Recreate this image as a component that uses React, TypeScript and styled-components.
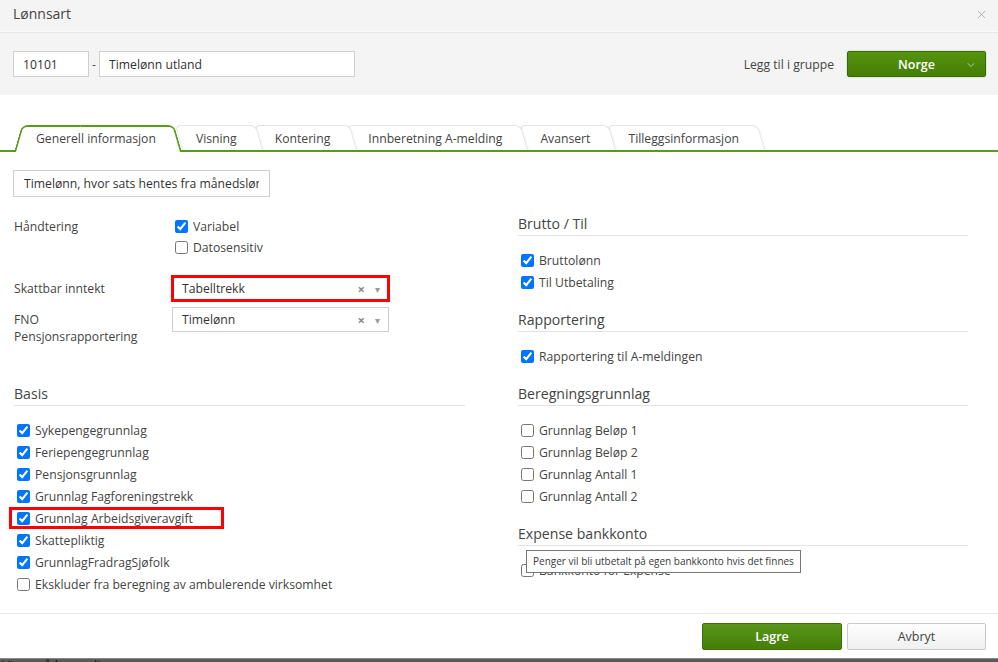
import styled, { createGlobalStyle } from "styled-components"
import { X, ChevronDown } from "lucide-react"

const GREEN = "#5a9b1c"
const TEXT = "12.2px"

const GlobalStyle = createGlobalStyle`
  html, body {
    margin: 0;
    padding: 0;
    background: #fff;
  }
  body {
    font-family: "Open Sans", "Liberation Sans", sans-serif;
    font-size: ${TEXT};
    color: #444;
  }
  * {
    box-sizing: border-box;
  }
`

const tabs = [
  "Generell informasjon",
  "Visning",
  "Kontering",
  "Innberetning A-melding",
  "Avansert",
  "Tilleggsinformasjon",
]

const basis = [
  { label: "Sykepengegrunnlag", checked: true },
  { label: "Feriepengegrunnlag", checked: true },
  { label: "Pensjonsgrunnlag", checked: true },
  { label: "Grunnlag Fagforeningstrekk", checked: true },
  { label: "Grunnlag Arbeidsgiveravgift", checked: true, highlight: true },
  { label: "Skattepliktig", checked: true },
  { label: "GrunnlagFradragSjøfolk", checked: true },
  { label: "Ekskluder fra beregning av ambulerende virksomhet", checked: false },
]

const sections = [
  {
    title: "Brutto / Til",
    items: [
      { label: "Bruttolønn", checked: true },
      { label: "Til Utbetaling", checked: true },
    ],
  },
  {
    title: "Rapportering",
    items: [{ label: "Rapportering til A-meldingen", checked: true }],
  },
  {
    title: "Beregningsgrunnlag",
    items: [
      { label: "Grunnlag Beløp 1", checked: false },
      { label: "Grunnlag Beløp 2", checked: false },
      { label: "Grunnlag Antall 1", checked: false },
      { label: "Grunnlag Antall 2", checked: false },
    ],
  },
  {
    title: "Expense bankkonto",
    items: [{ label: "Bankkonto for Expense", checked: false }],
    tooltip: "Penger vil bli utbetalt på egen bankkonto hvis det finnes",
  },
]

function Check({ label, checked, highlight }: { label: string; checked: boolean; highlight?: boolean }) {
  return (
    <CheckItem $highlight={highlight}>
      <CheckBox type="checkbox" defaultChecked={checked} />
      <span>{label}</span>
    </CheckItem>
  )
}

export default function App() {
  return (
    <>
      <GlobalStyle />
      <Dialog>
        <Header>
          <Title>Lønnsart</Title>
          <X size={13} strokeWidth={1.4} color="#9a9a9a" />
        </Header>
        <TopBar>
          <NumberInput defaultValue="10101" readOnly />
          <Dash>-</Dash>
          <NameInput defaultValue="Timelønn utland" readOnly />
          <Spacer />
          <GroupLabel>Legg til i gruppe</GroupLabel>
          <GroupButton>
            <span>Norge</span>
            <ChevronDown size={12} strokeWidth={1.3} color="#e6f0dc" />
          </GroupButton>
        </TopBar>

        <Main>
          <TabBar>
            {tabs.map((t, i) => (
              <Tab key={t} $active={i === 0} $z={i === 0 ? 10 : 8 - i}>
                {t}
              </Tab>
            ))}
          </TabBar>

          <Content>
            <DescInput defaultValue="Timelønn, hvor sats hentes fra månedslønn" readOnly />

            <Columns>
              <Column>
                <FieldRow $top={2}>
                  <FieldLabel $lh={21}>Håndtering</FieldLabel>
                  <div>
                    <SmallCheck>
                      <CheckBox type="checkbox" defaultChecked />
                      <span>Variabel</span>
                    </SmallCheck>
                    <SmallCheck>
                      <CheckBox type="checkbox" />
                      <span>Datosensitiv</span>
                    </SmallCheck>
                  </div>
                </FieldRow>
                <FieldRow $top={18}>
                  <FieldLabel $lh={17} $pad={4}>Skattbar inntekt</FieldLabel>
                  <Select $highlight>
                    <SelectValue>Tabelltrekk</SelectValue>
                    <Clear>×</Clear>
                    <Arrow>▾</Arrow>
                  </Select>
                </FieldRow>
                <FieldRow $top={6}>
                  <FieldLabel $lh={17} $pad={4}>
                    FNO
                    <br />
                    Pensjonsrapportering
                  </FieldLabel>
                  <Select>
                    <SelectValue>Timelønn</SelectValue>
                    <Clear>×</Clear>
                    <Arrow>▾</Arrow>
                  </Select>
                </FieldRow>

                <Section $top={39}>
                  <SectionTitle>Basis</SectionTitle>
                  <CheckList>
                    {basis.map((b) => (
                      <Check key={b.label} {...b} />
                    ))}
                  </CheckList>
                </Section>
              </Column>

              <Column>
                {sections.map((s, i) => (
                  <Section key={s.title} $top={i === 0 ? 0 : 17}>
                    <SectionTitle>{s.title}</SectionTitle>
                    <CheckList>
                      {s.items.map((it) => (
                        <Check key={it.label} {...it} />
                      ))}
                    </CheckList>
                    {s.tooltip && <Tooltip>{s.tooltip}</Tooltip>}
                  </Section>
                ))}
              </Column>
            </Columns>
          </Content>
        </Main>

        <Footer>
          <PrimaryButton>Lagre</PrimaryButton>
          <SecondaryButton>Avbryt</SecondaryButton>
        </Footer>
        <Backdrop>Vises på lønnsslipp</Backdrop>
      </Dialog>
    </>
  )
}

const Dialog = styled.div`
  width: 998px;
  height: 662px;
  display: flex;
  flex-direction: column;
  overflow: hidden;
  background: #fff;
`

const Header = styled.div`
  height: 33px;
  display: flex;
  align-items: flex-start;
  justify-content: space-between;
  padding: 4px 10px 0 13px;
  background: #f4f4f4;
  border-bottom: 1px solid #e9e9e9;
  box-shadow: inset 0 -1px 0 #fbfbfb;

  svg {
    margin-top: 4px;
  }
`

const Title = styled.div`
  font-size: 14px;
  line-height: 20px;
  color: #444;
`

const TopBar = styled.div`
  height: 62px;
  display: flex;
  align-items: center;
  padding: 0 12px 0 13px;
  background: #f4f4f4;
`

const TextBox = styled.input`
  height: 26px;
  border: 1px solid #cfcfcf;
  background: #fff;
  padding: 0 9px;
  font-family: inherit;
  font-size: ${TEXT};
  color: #333;
  outline: none;
  border-radius: 0;
`

const NumberInput = styled(TextBox)`
  width: 76px;
`

const NameInput = styled(TextBox)`
  width: 256px;
`

const Dash = styled.span`
  width: 10px;
  text-align: center;
  color: #555;
`

const Spacer = styled.div`
  flex: 1;
`

const GroupLabel = styled.span`
  margin-right: 13px;
  color: #444;
`

const GroupButton = styled.div`
  position: relative;
  width: 139px;
  height: 26px;
  display: flex;
  align-items: center;
  justify-content: center;
  background: linear-gradient(#56940f, #457d06);
  border: 1px solid #3b6b03;
  border-radius: 2px;
  box-shadow: 0 0 0 1px #dfe5d8;
  color: #fff;
  font-size: 12.5px;
  font-weight: 600;

  svg {
    position: absolute;
    right: 8px;
    top: 7px;
  }
`

const Main = styled.div`
  height: 518px;
  padding-top: 30px;
`

const TabBar = styled.div`
  display: flex;
  align-items: flex-end;
  height: 27px;
  padding-left: 14px;
  border-bottom: 2px solid ${GREEN};
`

const Tab = styled.div<{ $active?: boolean; $z: number }>`
  position: relative;
  z-index: ${(p) => p.$z};
  height: ${(p) => (p.$active ? "27px" : "25px")};
  margin-bottom: ${(p) => (p.$active ? "-2px" : "0")};
  padding: ${(p) => (p.$active ? "1px 26px 1px 22px" : "1px 24px 0 14px")};
  line-height: 25px;
  color: #444;
  white-space: nowrap;

  &::before,
  &::after {
    content: "";
    position: absolute;
    top: 0;
    bottom: 0;
    z-index: -1;
    background: #fff;
    transform-origin: bottom;
  }

  &::before {
    left: 0;
    width: ${(p) => (p.$active ? "55%" : "100%")};
    border: ${(p) => (p.$active ? `2px solid ${GREEN}` : "1px solid #e4e4e4")};
    border-bottom: none;
    border-right: ${(p) => (p.$active ? "none" : "1px solid #e4e4e4")};
    border-radius: ${(p) => (p.$active ? "6px 0 0 0" : "6px 6px 0 0")};
    transform: skewX(${(p) => (p.$active ? "-16deg" : "16deg")});
    box-shadow: ${(p) => (p.$active ? "none" : "1px 0 1px rgba(0, 0, 0, 0.05)")};
  }

  &::after {
    display: ${(p) => (p.$active ? "block" : "none")};
    right: 0;
    width: 55%;
    border: 2px solid ${GREEN};
    border-bottom: none;
    border-left: none;
    border-radius: 0 6px 0 0;
    transform: skewX(16deg);
  }
`

const Content = styled.div`
  padding: 18px 30px 0 13px;
`

const DescInput = styled(TextBox)`
  width: 257px;
  height: 27px;
  padding: 0 10px;
`

const Columns = styled.div`
  display: grid;
  grid-template-columns: 451px 450px;
  column-gap: 53px;
  margin-top: 17px;
  padding-left: 1px;
`

const Column = styled.div`
  display: flex;
  flex-direction: column;
`

const FieldRow = styled.div<{ $top: number }>`
  display: grid;
  grid-template-columns: 158px 217px;
  align-items: start;
  margin-top: ${(p) => p.$top}px;
`

const FieldLabel = styled.div<{ $lh: number; $pad?: number }>`
  line-height: ${(p) => p.$lh}px;
  padding-top: ${(p) => p.$pad ?? 0}px;
  color: #444;
`

const SmallCheck = styled.label`
  display: flex;
  align-items: center;
  height: 21px;
  color: #444;
`

const CheckBox = styled.input`
  width: 13px;
  height: 13px;
  margin: 0 5px 0 3px;
  flex: none;
`

const Select = styled.div<{ $highlight?: boolean }>`
  height: 25px;
  display: flex;
  align-items: center;
  padding: 0 8px 0 9px;
  background: #fff;
  border: 1px solid ${(p) => (p.$highlight ? "#f00" : "#cfcfcf")};
  box-shadow: ${(p) => (p.$highlight ? "0 0 0 1px #f00, inset 0 0 0 1px #f00" : "none")};
  color: #333;
`

const SelectValue = styled.span`
  flex: 1;
`

const Clear = styled.span`
  margin-right: 10px;
  color: #8a8a8a;
  font-size: 13px;
  font-weight: 700;
`

const Arrow = styled.span`
  color: #9a9a9a;
  font-size: 10px;
`

const Section = styled.div<{ $top: number }>`
  position: relative;
  margin-top: ${(p) => p.$top}px;
`

const SectionTitle = styled.div`
  font-size: 14.1px;
  line-height: 20px;
  padding-bottom: 1px;
  color: #444;
  border-bottom: 1px solid #e2e2e2;
`

const CheckList = styled.div`
  margin-top: 13px;
`

const CheckItem = styled.label<{ $highlight?: boolean }>`
  display: flex;
  align-items: center;
  height: 22px;
  color: #444;
  ${(p) =>
    p.$highlight &&
    `
    width: 215px;
    margin-left: -5px;
    padding-left: 5px;
    box-shadow: inset 0 0 0 3px #f00;
  `}
`

const Tooltip = styled.div`
  position: absolute;
  top: 26px;
  left: 8px;
  height: 23px;
  padding: 0 6px;
  line-height: 21px;
  background: #fff;
  border: 1px solid #767676;
  font-size: 10px;
  color: #3a3a3a;
  white-space: nowrap;
`

const Footer = styled.div`
  height: 45px;
  display: flex;
  justify-content: flex-end;
  align-items: flex-start;
  gap: 5px;
  padding: 9px 12px 0;
  border-top: 1px solid #e6e6e6;
`

const Button = styled.div`
  height: 27px;
  display: flex;
  align-items: center;
  justify-content: center;
  border-radius: 2px;
  font-size: 12.5px;
`

const PrimaryButton = styled(Button)`
  width: 140px;
  background: linear-gradient(#58961a, #457d07);
  border: 1px solid #3d6f04;
  color: #fff;
  font-weight: 600;
`

const SecondaryButton = styled(Button)`
  width: 139px;
  background: linear-gradient(#fefefe, #f0f0f0);
  border: 1px solid #c9c9c9;
  color: #444;
`

const Backdrop = styled.div`
  height: 4px;
  overflow: hidden;
  background: #5a5a5a;
  border-top: 1px solid #8a8a8a;
  padding-left: 2px;
  font-size: 13px;
  line-height: 13px;
  color: #111;
`
